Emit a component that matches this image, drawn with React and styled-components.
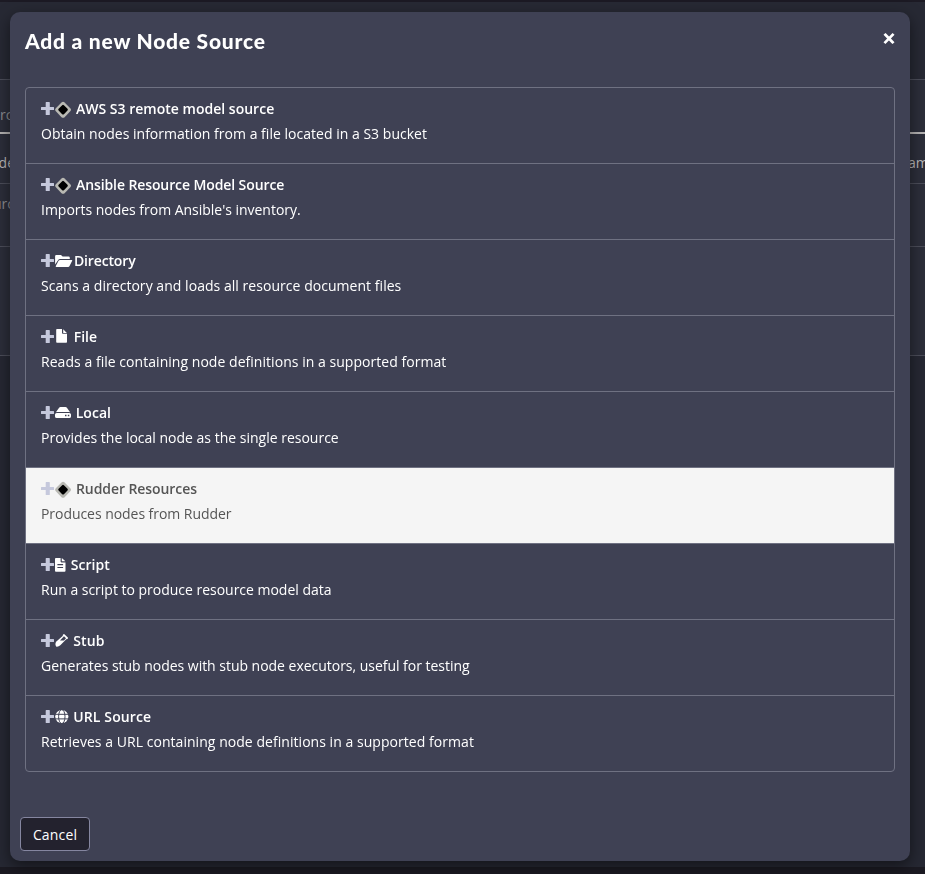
import React from "react";
import styled, { createGlobalStyle, css } from "styled-components";

const Global = createGlobalStyle`
  * { box-sizing: border-box; }
  html, body { margin: 0; height: 100%; overflow: hidden; }
  body {
    background: #272933;
    color: #fff;
    font: 400 14px/20px "Open Sans", sans-serif;
  }
`;

/* Page behind the dialog */
const Page = styled.main`
  height: 874px;
  display: flex;
  flex-direction: column;
`;
const TopEdge = styled.div`
  height: 2px;
  background: #1c1a24;
`;
const Band = styled.div`
  height: ${(p) => p.$height}px;
  padding-top: ${(p) => p.$top || 0}px;
  display: flex;
  justify-content: space-between;
  align-items: flex-start;
  white-space: nowrap;
  color: ${(p) => p.$color || "#8a8b90"};
  background: ${(p) => p.$bg || "#2c2e3a"};
  border-bottom: ${(p) => (p.$strong ? "2px solid #b4b2b2" : "1px solid #4b4d59")};
`;
const Edge = styled.span`
  width: ${(p) => p.$width}px;
  display: flex;
  justify-content: ${(p) => (p.$end ? "flex-end" : "flex-start")};
`;
const Rest = styled.div`
  flex: 1;
  background: #262833;
`;
const BottomEdge = styled.div`
  height: 7px;
  background: #1b1a22;
`;

/* Dialog */
const Overlay = styled.div`
  position: fixed;
  inset: 0;
  padding: 12px 15px 13px 10px;
`;
const Dialog = styled.section`
  width: 900px;
  height: 849px;
  display: flex;
  flex-direction: column;
  background: #3f4154;
  border-radius: 10px;
  box-shadow: 0 5px 15px rgba(0, 0, 0, 0.5);
`;
const Header = styled.header`
  height: 60px;
  padding: 14px 15px 0;
  display: flex;
  justify-content: space-between;
  align-items: flex-start;
`;
const Title = styled.h4`
  margin: 0;
  font: 900 21px/30px Lato, sans-serif;
  letter-spacing: 0.77px;
`;
const Close = styled.button`
  margin: 6px 0 0;
  padding: 0;
  width: 12px;
  height: 13px;
  display: flex;
  border: 0;
  background: none;
  color: #fff;
`;
const Body = styled.div`
  flex: 1;
  padding: 15px;
`;
const List = styled.div`
  height: 685px;
  border: 1px solid #6f7182;
  border-radius: 4px;
  overflow: hidden;
`;
const Item = styled.a`
  height: 76px;
  padding: 11px 15px 0;
  display: block;
  border-bottom: 1px solid #6f7182;
  &:last-child { border-bottom: 0; }
  ${(p) =>
    p.$active &&
    css`
      background: #f5f5f5;
      color: #555;
    `}
`;
const Name = styled.div`
  height: 20px;
  display: flex;
  align-items: center;
  white-space: nowrap;
  font-weight: 600;
`;
const Label = styled.span`
  letter-spacing: ${(p) => p.$spacing}px;
`;
const Icons = styled.span`
  width: ${(p) => p.$width}px;
  height: 20px;
  display: flex;
  flex: none;
`;
const Icon = styled.svg`
  display: block;
  flex: none;
`;
const Description = styled.p`
  margin: 5px 0 0;
  white-space: nowrap;
  letter-spacing: ${(p) => p.$spacing}px;
`;
const Footer = styled.footer`
  height: 44px;
  padding: 0 10px 10px;
`;
const Cancel = styled.button`
  width: 70px;
  height: 34px;
  padding: 1px 0 0;
  border: 1px solid #8586a0;
  border-radius: 4px;
  background: #23222e;
  color: #fff;
  font: 400 14px/20px "Open Sans", sans-serif;
  letter-spacing: 0.15px;
`;

const Plus = () => (
  <Icon width="14" height="20" viewBox="0 0 14 20">
    <path fill="#c5c8dc" d="M5.300 3h2.900q.6 0 .6.600V7.900h3.700q.5 0 .5.600v2q0 .6-.5.600H8.800v4.300q0 .6-.6.600H5.300q-.6 0-.6-.6V11.100H.5q-.5 0-.5-.6v-2Q0 7.900.5 7.900H4.700V3.600q0-.6.6-.6z" />
  </Icon>
);

const glyphs = {
  diamond: (
    <>
      <path fill="#b9b9b3" d="M8 2.700Q8.900 2.700 9.600 3.400L15.500 9.500Q16.500 10.900 15.500 12L9.600 18.200Q8 19.400 6.500 18.200L.6 12Q-.4 10.900.6 9.500L6.500 3.400Q7.200 2.700 8 2.700z" />
      <path fill="#000" d="M8 5.800q.5 0 .9.400L12.500 9.800q.8 1 0 1.800L8.900 15.200q-.9.700-1.700 0L3.600 11.600q-.8-.9 0-1.800L7.200 6.200q.3-.4.800-.4z" />
    </>
  ),
  folder: (
    <path fill="#fff" d="M.1 13.500V5.200Q.1 4 1.300 4H6l1.600 1.500h6q1.200 0 1.200 1.200V8H5.100Q3.800 8 3.200 9.100zM1.400 15.900q-1 0-.6-.9L3.700 9.600Q4.100 8.900 4.900 8.900H16.700q.9 0 .5.900L14.400 15.200q-.4.700-1.200.7z" />
  ),
  file: (
    <path fill="#fff" d="M2 2h5v4q0 .8.800.8H12v8.200q0 .8-.8.800H2q-.8 0-.8-.8V2.800Q1.200 2 2 2zM8.200 2.200L11.900 5.900H8.200z" />
  ),
  drive: (
    <path fill="#fff" fillRule="evenodd" d="M4.100 4.800Q4.600 4 5.500 4h5q.9 0 1.400.8l3.200 4.400q-.6-.2-1.100-.2H2q-.6 0-1.100.2zM1.800 10h12.400q1.800 0 1.800 1.600v1.800q0 1.600-1.800 1.600H1.800Q0 15 0 13.400v-1.800Q0 10 1.800 10zM10 11.700v1.600h1.500v-1.600zM12.800 11.700v1.600h1.500v-1.600z" />
  ),
  script: (
    <path fill="#fff" fillRule="evenodd" d="M.9 3h4.700v3.600q0 .8.800.8h4.100v8.400q0 .9-.9.900H.9Q0 16.700 0 15.800V3.900Q0 3 .9 3zM6.800 3.100l3.600 3.200H6.800zM2.400 9v1.200h5.700V9zM2.400 11.900v1.200h5.700v-1.200z" />
  ),
  vial: (
    <path fill="#fff" fillRule="evenodd" d="M8.500 3.200q.4-.5.9 0l3.400 3.400q.5.500 0 1l-.5.500q-.4.300-.8 0L5.300 14.300Q3.500 16 1.400 15.700-.4 13.800 1.100 10.800L7.900 4.700q-.4-.4.100-1zM5 9.400h4L11 7.300 9 5.300z" />
  ),
  globe: (
    <>
      <circle cx="6.800" cy="9.600" r="6.600" fill="#fff" />
      <g fill="none" stroke="#404255" strokeWidth="1">
        <path d="M0 7.300h14M0 11.900h14" />
        <ellipse cx="6.800" cy="9.600" rx="3.200" ry="7" />
      </g>
    </>
  ),
};

const Glyph = ({ name }) => (
  <Icon width="18" height="20" viewBox="0 0 18 20">
    {glyphs[name]}
  </Icon>
);

const sources = [
  ["diamond", 35, "AWS S3 remote model source", 0.01, "Obtain nodes information from a file located in a S3 bucket", 0.02],
  ["diamond", 35, "Ansible Resource Model Source", -0.1, "Imports nodes from Ansible's inventory.", -0.02],
  ["folder", 33, "Directory", -0.15, "Scans a directory and loads all resource document files", 0.04],
  ["file", 32.7, "File", 0, "Reads a file containing node definitions in a supported format", 0.04],
  ["drive", 34.7, "Local", 0.05, "Provides the local node as the single resource", 0],
  ["diamond", 35, "Rudder Resources", -0.08, "Produces nodes from Rudder", -0.05],
  ["script", 29.7, "Script", 0.06, "Run a script to produce resource model data", -0.015],
  ["vial", 32.3, "Stub", 0.08, "Generates stub nodes with stub node executors, useful for testing", -0.025],
  ["globe", 32.3, "URL Source", 0.11, "Retrieves a URL containing node definitions in a supported format", 0.045],
];

export default function App() {
  return (
    <>
      <Global />
      <Page>
        <TopEdge />
        <Band $height={78} $bg="#272934" />
        <Band $height={54} $top={25} $strong>
          <Edge $width={14}>rc</Edge>
        </Band>
        <Band $height={50} $top={19} $color="#b8b7b7">
          <Edge $width={15} $end>de</Edge>
          <Edge $width={17}>am</Edge>
        </Band>
        <Band $height={63} $top={10}>
          <Edge $width={14} $end>urc</Edge>
        </Band>
        <Band $height={109} />
        <Rest />
        <BottomEdge />
      </Page>
      <Overlay>
        <Dialog role="dialog">
          <Header>
            <Title>Add a new Node Source</Title>
            <Close aria-label="Close">
              <Icon width="12" height="13" viewBox="0 0 12 13">
                <path d="M2.400 2.800L9.600 10.200M9.600 2.800L2.400 10.200" stroke="#fff" strokeWidth="2.700" strokeLinecap="square" />
              </Icon>
            </Close>
          </Header>
          <Body>
            <List>
              {sources.map(([icon, width, name, nameSpacing, text, spacing]) => (
                <Item key={name} $active={name === "Rudder Resources"}>
                  <Name>
                    <Icons $width={width}>
                      <Plus />
                      <Glyph name={icon} />
                    </Icons>
                    <Label $spacing={nameSpacing}>{name}</Label>
                  </Name>
                  <Description $spacing={spacing}>{text}</Description>
                </Item>
              ))}
            </List>
          </Body>
          <Footer>
            <Cancel>Cancel</Cancel>
          </Footer>
        </Dialog>
      </Overlay>
    </>
  );
}
